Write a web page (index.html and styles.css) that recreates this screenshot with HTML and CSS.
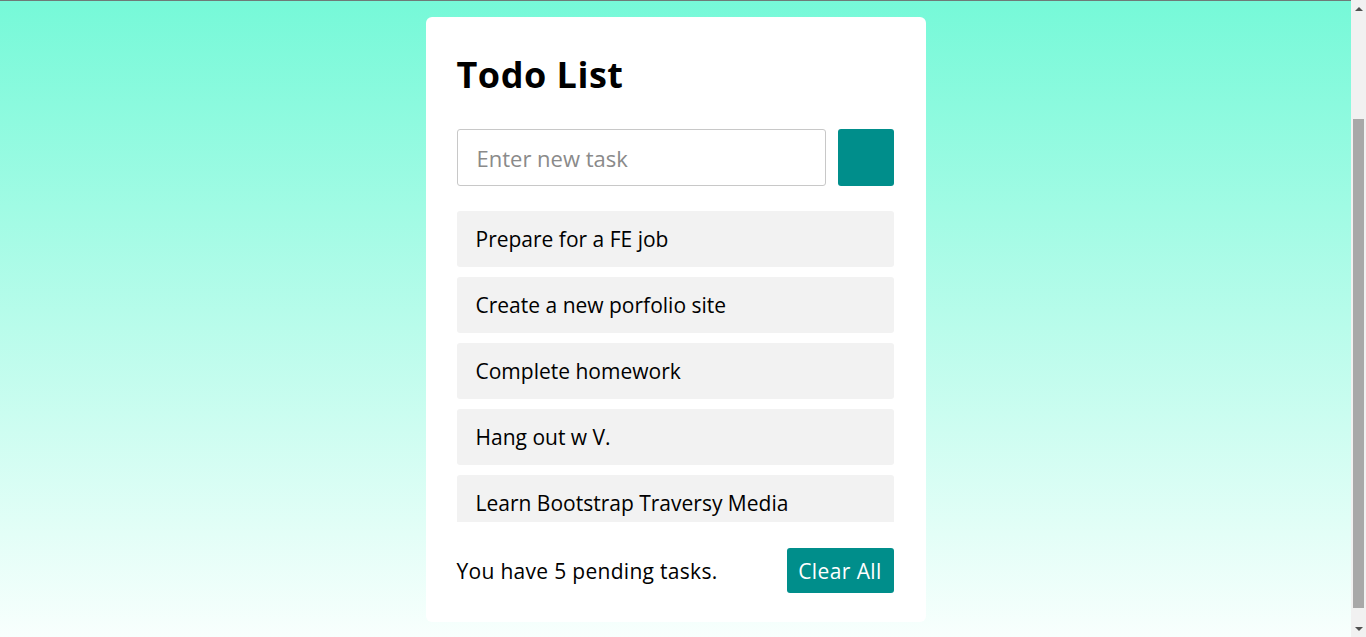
FILE: index.html
```html
<!DOCTYPE html>
<html lang="en">
<head>
<meta charset="utf-8">
<title>Todo List</title>
<link rel="stylesheet" href="styles.css">
</head>
<body>
<div class="page">
  <div class="card">
    <h1 class="title">Todo List</h1>
    <div class="input-row">
      <input class="task-input" type="text" placeholder="Enter new task">
      <button class="add-btn" type="button"></button>
    </div>
    <ul class="todo-list">
      <li class="todo-item">Prepare for a FE job</li>
      <li class="todo-item">Create a new porfolio site</li>
      <li class="todo-item">Complete homework</li>
      <li class="todo-item">Hang out w V.</li>
      <li class="todo-item">Learn Bootstrap Traversy Media</li>
    </ul>
    <div class="footer">
      <span class="pending">You have 5 pending tasks.</span>
      <button class="clear-btn" type="button">Clear All</button>
    </div>
  </div>
</div>
<div class="scrollbar">
  <div class="sb-arrow sb-up"></div>
  <div class="sb-track"><div class="sb-thumb"></div></div>
  <div class="sb-arrow sb-down"></div>
</div>
</body>
</html>
```

FILE: styles.css
```css
* { box-sizing: border-box; }
html, body { margin: 0; padding: 0; }
body {
  display: flex;
  height: 637px;
  overflow: hidden;
  font-family: "Open Sans", "Liberation Sans", sans-serif;
  color: #000;
}
.page {
  flex: 1;
  display: flex;
  justify-content: center;
  align-items: flex-start;
  padding-top: 16px;
  border-top: 1px solid #6e7b78;
  background: linear-gradient(to bottom, #76f9d8 0%, #f8fffd 100%);
}
.card {
  width: 500px;
  background: #fff;
  border-radius: 6px;
  padding: 34px 32px 29px 31px;
}
.title {
  margin: 0;
  font-size: 36px;
  font-weight: 700;
  letter-spacing: 0.5px;
  line-height: 47px;
}
.input-row {
  display: flex;
  gap: 12px;
  margin-top: 31px;
  height: 57px;
}
.task-input {
  flex: 1;
  min-width: 0;
  height: 57px;
  border: 1px solid #c8c8c8;
  border-radius: 3px;
  padding: 0 19px;
  font-family: inherit;
  font-size: 22px;
  outline: none;
}
.task-input::placeholder { color: #8a8a8a; }
.add-btn {
  flex: none;
  width: 56px;
  height: 57px;
  border: none;
  border-radius: 3px;
  background: #008e8b;
}
.todo-list {
  list-style: none;
  margin: 25px 0 0;
  padding: 0;
  height: 311px;
  overflow: hidden;
  display: flex;
  flex-direction: column;
  gap: 10px;
}
.todo-item {
  flex: none;
  height: 56px;
  display: flex;
  align-items: center;
  padding: 0 19px;
  background: #f2f2f2;
  border-radius: 3px;
  font-size: 21px;
}
.footer {
  display: flex;
  justify-content: space-between;
  align-items: center;
  margin-top: 26px;
  height: 45px;
}
.pending { font-size: 21px; letter-spacing: 0.3px; }
.clear-btn {
  width: 107px;
  height: 45px;
  border: none;
  border-radius: 3px;
  background: #008e8b;
  color: #fff;
  font-family: inherit;
  font-size: 21px;
  letter-spacing: 0.4px;
  padding: 0;
}
.scrollbar {
  width: 15px;
  flex: none;
  background: #f1f1f1;
  display: flex;
  flex-direction: column;
}
.sb-arrow {
  height: 17px;
  flex: none;
  display: flex;
  justify-content: center;
  align-items: center;
}
.sb-up::before, .sb-down::before {
  content: "";
  width: 0;
  height: 0;
  border-left: 4px solid transparent;
  border-right: 4px solid transparent;
}
.sb-up::before { border-bottom: 4px solid #505050; }
.sb-down::before { border-top: 4px solid #505050; }
.sb-track {
  flex: 1;
  padding: 102px 2px 12px;
  display: flex;
}
.sb-thumb {
  flex: 1;
  background: #a8a8a8;
}
```
